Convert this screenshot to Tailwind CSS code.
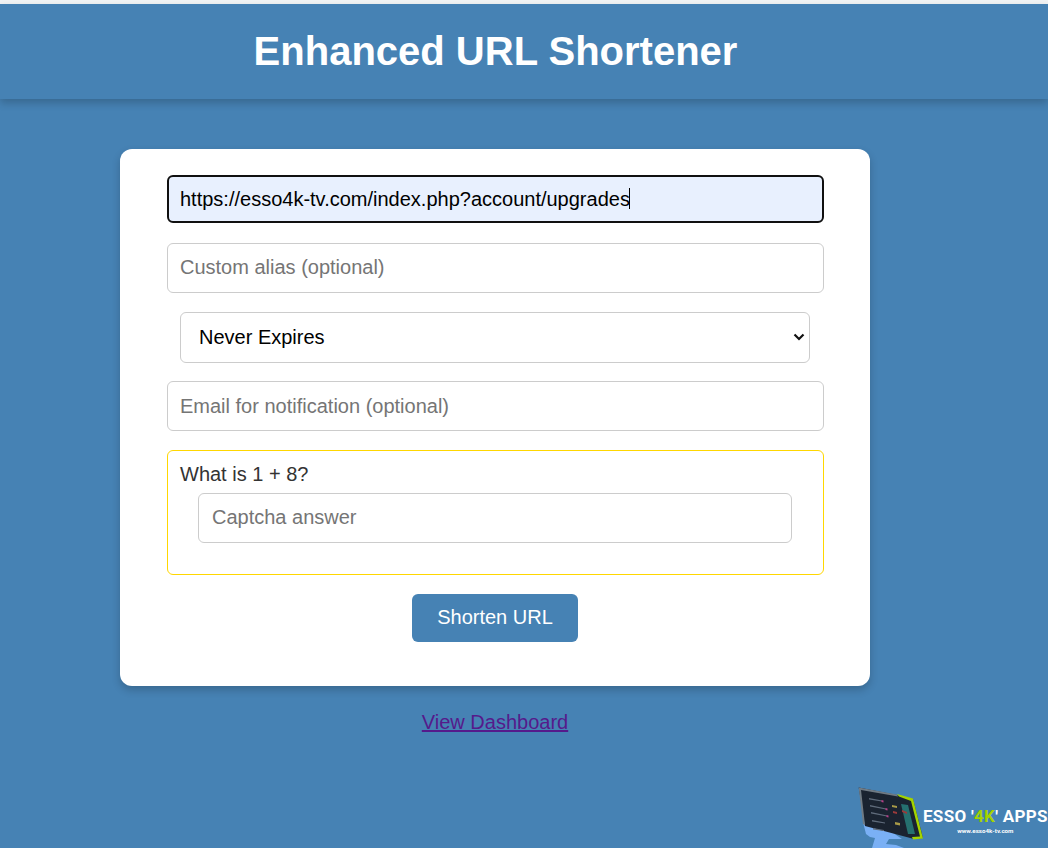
<!DOCTYPE html>
<html lang="en">
<head>
<meta charset="utf-8">
<script src="https://cdn.jsdelivr.net/npm/@tailwindcss/browser@4"></script>
<title>Enhanced URL Shortener</title>
</head>
<body class="m-0 h-[848px] w-[1048px] overflow-hidden bg-[#4682b4] font-['Liberation_Sans',Arial,sans-serif] text-[#333]">
<div class="h-1 bg-[#f1f3f4]"></div>
<header class="flex h-[95px] items-start justify-center bg-[#4682b4] pt-[22px] pr-[57px] shadow-[0_4px_8px_rgba(0,0,0,0.2)]">
  <h1 class="text-[40px] leading-[50px] font-bold text-white">Enhanced URL Shortener</h1>
</header>
<main class="ml-[120px] mt-[50px] w-[750px]">
  <form class="flex h-[537px] flex-col rounded-[12px] bg-white px-[47px] pt-[26px] shadow-[0_4px_8px_rgba(0,0,0,0.2)]">
    <div class="relative h-[48px] w-[657px]">
      <input type="text" value="https://esso4k-tv.com/index.php?account/upgrades" class="h-full w-full rounded-[6px] border-2 border-[#101010] bg-[#e8f0fe] px-[11px] text-[20px] text-black outline-none" />
      <span class="absolute left-[462px] top-[13px] h-[21px] w-px bg-black"></span>
    </div>
    <input type="text" placeholder="Custom alias (optional)" class="mt-5 h-[50px] w-[657px] rounded-[6px] border border-[#ccc] bg-white px-3 pb-[2px] text-[20px] text-black outline-none placeholder:text-[#757575]" />
    <div class="relative mt-[19px] ml-[13px] h-[51px] w-[630px]">
      <select class="h-full w-full appearance-none rounded-[6px] border border-[#ccc] bg-white pb-[2px] pl-[18px] pr-6 text-[20px] text-black outline-none">
        <option>Never Expires</option>
      </select>
      <svg width="12" height="8" viewBox="0 0 12 8" class="pointer-events-none absolute left-[613px] top-[21px]">
        <path d="M1.500 1.500 L6 6 L10.500 1.500" fill="none" stroke="#111" stroke-width="2.200"/>
      </svg>
    </div>
    <input type="text" placeholder="Email for notification (optional)" class="mt-[18px] h-[50px] w-[657px] rounded-[6px] border border-[#ccc] bg-white px-3 text-[20px] text-black outline-none placeholder:text-[#757575]" />
    <div class="mt-[19px] h-[125px] w-[657px] rounded-[6px] border border-[#ffd700] pl-3 pt-3">
      <div class="text-[20px] leading-[23px] text-[#333]">What is 1 + 8?</div>
      <input type="text" placeholder="Captcha answer" class="ml-[18px] mt-[7px] h-[50px] w-[594px] rounded-[6px] border border-[#ccc] bg-white px-[13px] pb-[2px] text-[20px] text-black outline-none placeholder:text-[#757575]" />
    </div>
    <button type="button" class="mt-[19px] ml-[245px] h-[48px] w-[166px] rounded-[6px] bg-[#4682b4] pb-[2px] text-[20px] text-white">Shorten URL</button>
  </form>
  <div class="mt-[25px] text-center text-[20px] leading-[23px]">
    <a href="#" class="text-[#551a8b] underline">View Dashboard</a>
  </div>
</main>
<div class="absolute left-[856px] top-[784px] flex h-[64px] w-[192px] items-start">
  <svg width="68" height="64" viewBox="0 0 68 64" class="shrink-0">
    <path d="M7 38 L10 50 L14 53 L19 54 L16 64 H48 L40 61 L30 60 L33 55 L46 55 L30 44 Z" fill="#7ab0f5"/>
    <path d="M2.700 3.500 L41 11 L57 15 L66 50 L66.700 54 L58 55 L9 42 Z" fill="#1a2330"/>
    <path d="M2.700 3.500 L41 10.500 L42 12.500 L5 6 L9 41 L7 40 Z" fill="#6f7a84"/>
    <path d="M41 10 L57 14.500 L67 54.500 L57 55.500 L56 53 L64 52.500 L55 17 L43 12.500 Z" fill="#a4d300"/>
    <path d="M13 14 L26 16.500 V17.500 L13 15.500 Z M14 21 L30 24.500 V25.500 L14 22.500 Z M15 28 L31 31.500 V32.500 L15 29.500 Z M16 36 L29 38.500 V39.500 L16 37.500 Z M17 44 L28 46 V47 L17 45.500 Z" fill="#5f6b7b"/>
    <path d="M25.500 16 l2 .5 v2 l-2 -.5 z M29.500 24 l2 .5 v2 l-2 -.5 z M30.500 31 l2 .5 v2 l-2 -.5 z" fill="#b83f88"/>
    <path d="M45 20 L52 21 L59 50 L52 50 Z" fill="#25706f"/>
    <path d="M36 21 l5 1 v2 l-5 -1 z M39 38 l5 1 v2.500 l-5 -1 z" fill="#a89a48"/>
    <path d="M46 26 l5 2 v2 l-5 -2 z M37 27 l4 1 v2 l-4 -1 z" fill="#9c3a3a"/>
  </svg>
  <div class="ml-[-1px] mt-[22px] flex flex-col items-center">
    <div class="font-['Roboto',sans-serif] text-[17px] leading-[20px] font-bold tracking-[0.3px] whitespace-nowrap text-white">ESSO '<span class="text-[#a4d300]">4K</span>' APPS</div>
    <div class="font-['Roboto',sans-serif] mt-[2px] text-[6.2px] leading-[7px] font-bold text-white">www.esso4k-tv.com</div>
  </div>
</div>
</body>
</html>
